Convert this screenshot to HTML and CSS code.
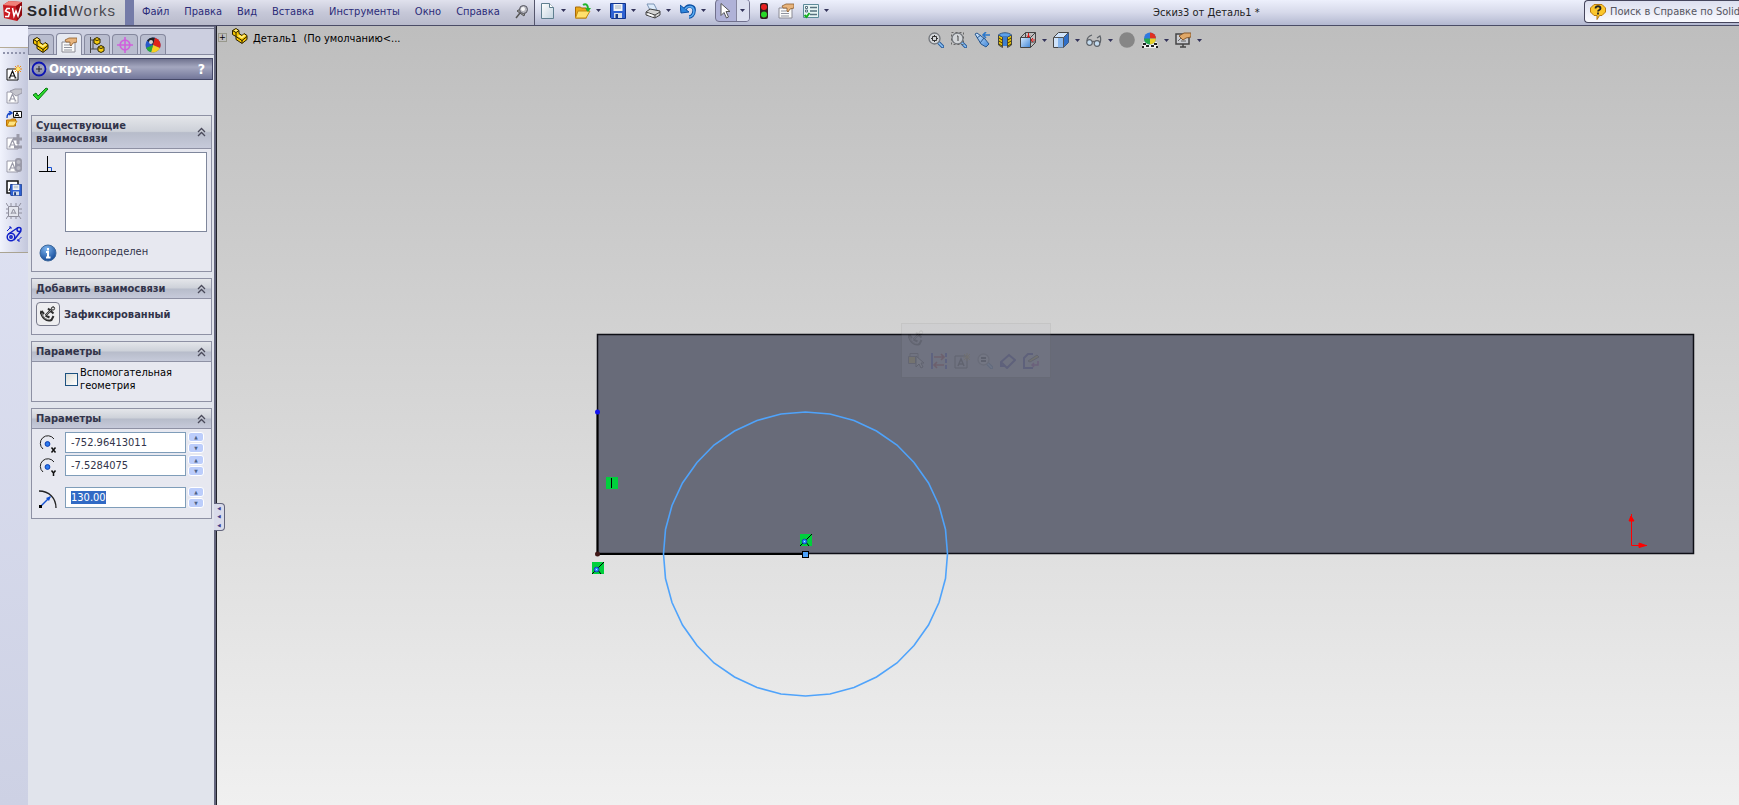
FILE: index.html
```html
<!DOCTYPE html>
<html lang="ru">
  <head>
    <meta charset="UTF-8" />
    <meta name="viewport" content="width=device-width, initial-scale=1.0" />
    <title>SolidWorks - Эскиз3 от Деталь1</title>
    <link rel="stylesheet" href="styles.css">
  </head>
  <body>
    <!-- Общие значки -->
    <svg class="defs" width="0" height="0" aria-hidden="true">
      <defs>
        <linearGradient id="gBlue" x1="0" y1="0" x2="1" y2="1">
          <stop offset="0" stop-color="#d8ecff" />
          <stop offset="1" stop-color="#3f86d8" />
        </linearGradient>
        <linearGradient id="gPage" x1="0" y1="0" x2="1" y2="1">
          <stop offset="0" stop-color="#ffffff" />
          <stop offset="1" stop-color="#c2d3df" />
        </linearGradient>
        <radialGradient id="gInfo" cx="0.4" cy="0.25" r="0.8">
          <stop offset="0" stop-color="#7db4ee" />
          <stop offset="1" stop-color="#0e4494" />
        </radialGradient>
      </defs>
      <symbol id="caret" viewBox="0 0 5 3"><path d="M0 0h5L2.500 3z" fill="#33335a" /></symbol>
      <symbol id="chevrons" viewBox="0 0 9 10">
        <path d="M1 5l3.500-3.500L8 5M1 9l3.500-3.500L8 9" fill="none" stroke="#4a4a5a" stroke-width="1.300" />
      </symbol>
      <symbol id="part" viewBox="0 0 16 16">
        <path d="M.5 2.500L4 .5l3 2v3l3 2 2-2 3 2v4l-5 4-6-4v-3l-3.500-2z" fill="#f5c400" stroke="#2a2000" />
        <path d="M.5 2.500l3.500 2 3-2M4 4.500v4l6 4 5-4M10 12v3" fill="none" stroke="#2a2000" />
        <path d="M4 1.200L6 2.500 4 3.800 2 2.600zM7.500 7l2.500 1.500 2-2 1.800 1-3.800 3L5.500 8z" fill="#ffee80" />
      </symbol>
      <symbol id="props" viewBox="0 0 16 16">
        <path d="M1 5h13v10H1z" fill="#fafafa" stroke="#8a8a94" />
        <path d="M3 8h8M3 10.500h8M3 13h8" stroke="#8f939e" />
        <path d="M4 3l4-2 8 0v4l-4 1-2 3-1-1 0-3-4 0z" fill="#e8b47c" stroke="#8a5a2c" stroke-width=".8" />
      </symbol>
      <symbol id="note" viewBox="0 0 16 16">
        <path d="M1 4h11v11H1z" fill="#fff" stroke="currentColor" />
        <path d="M3.500 13l3-7 3 7M4.500 11h4M2.500 13h2M8.500 13h2" fill="none" stroke="currentColor" stroke-width="1.200" />
      </symbol>
      <symbol id="disk" viewBox="0 0 16 16">
        <path d="M.5.5h15v15h-14l-1-1z" fill="#2f62d2" stroke="#12358c" />
        <path d="M3.500 1h9v7h-9z" fill="#f2f5f8" />
        <path d="M5 3h6M5 5h6" stroke="#a4b0bc" />
        <path d="M4 10h8v5H4z" fill="#d5dde8" /><path d="M5.500 11h2.500v4H5.500z" fill="#173a86" />
      </symbol>
      <symbol id="anchor" viewBox="0 0 16 16">
        <path d="M14 1L5.500 9.500M8 2.500l5.500 5M1.500 5c-1 6 5 11 10 9l2-4M1.500 5L4 8M1.500 5L0 8M5.500 9.500l4 2" fill="none" stroke="#2c2c2c" stroke-width="2" />
        <path d="M13.500 1.500L6 9M2 7c0 4 4 7 8 6.500" fill="none" stroke="#a5a5a5" stroke-width=".8" />
        <circle cx="13" cy="2.500" r="1.600" fill="#ddd" stroke="#2c2c2c" />
      </symbol>
      <symbol id="lens" viewBox="0 0 16 16">
        <path d="M10.500 10.500l4 4" stroke="#245a9c" stroke-width="3.400" stroke-linecap="round" />
        <path d="M10.500 10.500l4 4" stroke="#8fc3f5" stroke-width="1.600" stroke-linecap="round" />
        <circle cx="6.500" cy="6.500" r="5.500" fill="#d2d5d8" stroke="#73777c" stroke-width="1.300" />
      </symbol>
      <symbol id="coincident" viewBox="0 0 12 12">
        <path d="M0 0h12v12H0z" fill="#00d03c" />
        <path d="M0 12L12 0M5 7l4 5" stroke="#000" fill="none" />
        <circle cx="4.500" cy="7.500" r="2.400" fill="#2b8cff" stroke="#1547b0" />
        <path d="M4 7h1v1H4z" fill="#c0ecff" />
      </symbol>
    </svg>

    <header class="topbar">
      <div class="brand">
        <svg class="brand-logo" width="22" height="22" viewBox="0 0 22 22">
          <path d="M1 5l6-4 13 1v13l-5 6-13-3z" fill="#c81a20" />
          <path d="M1 5l6-4 13 1-6 4z" fill="#f08078" />
          <path d="M14 6l6-4v13l-5 6z" fill="#8f0a10" />
          <path d="M8 8.500H5L3.500 11l4 2-1 3.500H3M10.500 8l1.500 8 2-5 2 5 3-10" fill="none" stroke="#fff" stroke-width="1.500" />
        </svg>
        <span class="brand-name"><b>Solid</b>Works</span>
      </div>
      <nav class="menu">
        <a href="#">Файл</a>
        <a href="#">Правка</a>
        <a href="#">Вид</a>
        <a href="#">Вставка</a>
        <a href="#">Инструменты</a>
        <a href="#">Окно</a>
        <a href="#">Справка</a>
        <button class="icon-btn" aria-label="Закрепить">
          <svg width="14" height="16" viewBox="0 0 14 16">
            <path d="M1 14l4-5" stroke="#555" stroke-width="1.500" />
            <path d="M2 7l7 5 1-3-5-4z" fill="#999" stroke="#555" />
            <circle cx="8.500" cy="5.500" r="4" fill="#b7b7bf" stroke="#55555f" />
            <circle cx="8" cy="5" r="2" fill="#f8f8fa" />
          </svg>
        </button>
      </nav>
      <div class="toolbar">
        <button class="split" aria-label="Создать">
          <svg width="16" height="16" viewBox="0 0 16 16"><path d="M1.500.5h8l4 4v11h-12z" fill="url(#gPage)" stroke="#5f7f8f" /><path d="M9.500.5v4h4" fill="#fff" stroke="#5f7f8f" /></svg>
          <svg class="caret"><use href="#caret" /></svg>
        </button>
        <button class="split" aria-label="Открыть">
          <svg width="16" height="16" viewBox="0 0 16 16"><path d="M.5 4h5l1 1h5v10H.5z" fill="#e9a818" stroke="#a86a08" /><path d="M3 8h12l-4 7H.5z" fill="#ffe06c" stroke="#c48a10" /><path d="M8 2c3-2 5 0 5 4" fill="none" stroke="#22b52a" stroke-width="2" /><path d="M10 5h6l-3 4z" fill="#22b52a" /></svg>
          <svg class="caret"><use href="#caret" /></svg>
        </button>
        <button class="split" aria-label="Сохранить">
          <svg width="16" height="16"><use href="#disk" /></svg>
          <svg class="caret"><use href="#caret" /></svg>
        </button>
        <button class="split" aria-label="Печать">
          <svg width="16" height="16" viewBox="0 0 16 16"><path d="M2 1h7l3 6H5z" fill="#dcebfb" stroke="#7c95b5" /><path d="M1 9l4-3 10 2v4l-5 3-9-3z" fill="#d4d4d4" stroke="#444" /><path d="M1 9l9 3 5-3M10 12v3" fill="none" stroke="#444" /><path d="M3 11l5 2" stroke="#fff" stroke-width="1.500" /></svg>
          <svg class="caret"><use href="#caret" /></svg>
        </button>
        <button class="split" aria-label="Отменить">
          <svg width="16" height="16" viewBox="0 0 16 16"><path d="M5 6c3-5 10-3 9 2 0 4-3 6-5 6" fill="none" stroke="#0c50a4" stroke-width="3.500" /><path d="M0 2l1 8 8-1z" fill="#2f86dc" stroke="#0c50a4" /><path d="M5 6c3-4 9-3 9 2 0 4-3 6-5 6" fill="none" stroke="#5aaaf0" stroke-width="1.600" /></svg>
          <svg class="caret"><use href="#caret" /></svg>
        </button>
        <button class="split split-active" aria-label="Выбрать">
          <svg width="20" height="16" viewBox="0 0 20 16"><path d="M5 .5v12l3-3 2.500 5.500 2-1-2.500-5.500h4z" fill="#fff" stroke="#555" /></svg>
          <span class="split-drop"><svg class="caret"><use href="#caret" /></svg></span>
        </button>
        <button class="icon-btn" aria-label="Перестроить">
          <svg width="10" height="16" viewBox="0 0 10 16"><rect x="1" width="8" height="16" rx="2" fill="#302020" /><circle cx="5" cy="4" r="3" fill="#e82020" /><circle cx="5" cy="11.500" r="3" fill="#28d828" /></svg>
        </button>
        <button class="icon-btn" aria-label="Свойства файла"><svg width="16" height="16"><use href="#props" /></svg></button>
        <button class="split" aria-label="Параметры">
          <svg width="16" height="16" viewBox="0 0 16 16"><path d="M.5 1.500h15v13H.5z" fill="#e7f4f4" stroke="#5d8a9a" /><path d="M7 4.500h7M7 8h7M7 11.500h7" stroke="#56707e" stroke-width="1.400" /><path d="M2.500 3.500h2v2h-2zM2.500 7h2v2h-2z" fill="#fff" stroke="#56707e" /><path d="M1.500 12l2 2 3-4" fill="none" stroke="#16b020" stroke-width="2" /></svg>
          <svg class="caret"><use href="#caret" /></svg>
        </button>
      </div>
      <div class="doc-title">Эскиз3 от Деталь1 *</div>
      <div class="search">
        <svg width="16" height="16" viewBox="0 0 16 16"><path d="M4 .5h8L15.500 4v4L12 11.500H9.500L7 15.500v-4H4L.5 8V4z" fill="#fbc62c" stroke="#b8780c" /><path d="M5.500 4.500c0-3 5-3 5 0 0 1.500-2.500 1.500-2.500 3M8 8.500v2" fill="none" stroke="#222" stroke-width="1.800" /></svg>
        <input type="text" aria-label="Поиск" placeholder="Поиск в Справке по SolidWorks" />
      </div>
    </header>

    <main class="workspace">
      <div class="side">
        <div class="side-top"></div>
        <div class="side-tools">
          <button class="icon-btn" aria-label="Новый блок"><svg width="16" height="16" viewBox="0 0 16 16" color="#111"><use href="#note" /><path d="M12 0v8M8 4h8M9 1l6 6M15 1L9 7" stroke="#f08a10" /><circle cx="12" cy="4" r="2" fill="#ffe870" /></svg></button>
          <button class="icon-btn" aria-label="Править блок"><svg width="16" height="16" viewBox="0 0 16 16" color="#9a9aa8"><use href="#note" /><path d="M4 3l5-2h7v4l-6 3z" fill="#c4c4cc" stroke="#9a9aa8" /></svg></button>
          <button class="icon-btn" aria-label="Вставить блок"><svg width="16" height="16" viewBox="0 0 16 16"><path d="M7.500.5h8v6h-8z" fill="#fff" stroke="#111" /><path d="M9 5.500l2-4 2 4M10 4.500h2" fill="none" stroke="#111" /><path d="M1 7c0-3 1-5 4-5M3 0l3 2-3 2" fill="none" stroke="#1446c8" stroke-width="1.400" /><path d="M.5 9h4l1-1h4v7H.5z" fill="#f0a818" stroke="#b87008" /><path d="M3 10h8l-3 5H1z" fill="#ffe480" stroke="#c88810" /></svg></button>
          <button class="icon-btn" aria-label="Добавить"><svg width="16" height="16" viewBox="0 0 16 16" color="#9a9aa8"><use href="#note" /><path d="M12 0v10M7 5h9M8 13h8" stroke="#9a9aa8" stroke-width="3" /></svg></button>
          <button class="icon-btn" aria-label="Перестроить блок"><svg width="16" height="16" viewBox="0 0 16 16" color="#9a9aa8"><use href="#note" /><rect x="9" y="1" width="7" height="14" rx="3" fill="#9a9aa8" /><circle cx="12.500" cy="5" r="2" fill="#babac4" /><circle cx="12.500" cy="11" r="2" fill="#babac4" /></svg></button>
          <button class="icon-btn" aria-label="Сохранить блок"><svg width="16" height="16" viewBox="0 0 16 16"><path d="M1 1h11v12H1z" fill="#fff" stroke="#111" stroke-width="1.500" /><path d="M3 11l3-7" stroke="#111" /><use href="#disk" x="4" y="4" width="12" height="12" /></svg></button>
          <button class="icon-btn" aria-label="Разнести блок"><svg width="16" height="16" viewBox="0 0 16 16"><path d="M2.500 3.500h10v10h-10z" fill="#e4e6ee" stroke="#8e8e9c" /><path d="M5 11l2.500-5 2.500 5M6 10h3M0 0l2 3M5 0v3M10 0v3M15 0l-2 3M0 16l2-3M5 16v-3M10 16v-3M15 16l-2-3M0 6h2M0 10h2M13 6h3M13 10h3" fill="none" stroke="#8e8e9c" /></svg></button>
          <button class="icon-btn" aria-label="Ремень"><svg width="16" height="16" viewBox="0 0 16 16" fill="none" stroke="#1020c8" stroke-width="1.500"><circle cx="5" cy="11" r="3.800" /><circle cx="5" cy="11" r="1.200" /><circle cx="13" cy="3.500" r="2" /><path d="M2.500 8L12 1.500M8 14l7-9" /><path d="M1 5l4-4M3 1h2v2M15.500 11l-4 4M12 13v2h2" stroke-width="1" /></svg></button>
        </div>
      </div>

      <aside class="panel">
        <div class="tabs">
          <button class="tab" aria-label="Дерево"><svg width="16" height="16"><use href="#part" /></svg></button>
          <button class="tab tab-active" aria-label="Менеджер свойств"><svg width="16" height="16"><use href="#props" /></svg></button>
          <button class="tab" aria-label="Конфигурации"><svg width="16" height="16" viewBox="0 0 16 16"><path d="M1.500 0v16M1 3h5M1 12h8M4 3v9" stroke="#444" fill="none" /><path d="M5 2l3-1.500L11 2v4L8 7.500 5 6zM9 10l3-1.500 3 1.500v4l-3 1.500L9 14z" fill="#f6cc10" stroke="#302800" /><path d="M5.500 2.500L8 3.500l2.500-1M9.500 10.500l2.500 1 2.500-1" fill="none" stroke="#302800" /></svg></button>
          <button class="tab" aria-label="Размеры"><svg width="16" height="16" viewBox="0 0 16 16"><circle cx="8" cy="8" r="4.800" fill="none" stroke="#d060dc" stroke-width="1.800" /><path d="M8 0v16M0 8h16" stroke="#d060dc" stroke-width="1.600" /></svg></button>
          <button class="tab" aria-label="Отображение"><svg width="16" height="16" viewBox="0 0 16 16"><circle cx="8" cy="8" r="7.500" fill="#2858c8" /><path d="M8 8L2 3.500A7.500 7.500 0 0 1 10 .8z" fill="#222" /><path d="M8 8L10 .8A7.500 7.500 0 0 1 15 11z" fill="#e02418" /><path d="M8 8l7 3A7.500 7.500 0 0 1 6 15.200z" fill="#f8d020" /><path d="M8 8l-2 7.200A7.500 7.500 0 0 1 1 11z" fill="#28a838" /><circle cx="6" cy="5" r="2" fill="#fff" opacity=".8" /></svg></button>
        </div>

        <div class="panel-title">
          <svg width="16" height="16" viewBox="0 0 16 16"><circle cx="8" cy="8" r="6.500" fill="none" stroke="#0c14b4" stroke-width="1.800" /><path d="M8 5v6M5 8h6" stroke="#222" /></svg>
          <h1>Окружность</h1>
          <button class="help" aria-label="Помощь">?</button>
        </div>
        <button class="ok" aria-label="ОК">
          <svg width="17" height="14" viewBox="0 0 17 14"><path d="M1 8l3-2 2 3 8-8 2 1L6 13z" fill="#2bd82b" stroke="#0b7a14" /></svg>
        </button>

        <section class="group">
          <h2>Существующие взаимосвязи <svg width="9" height="10"><use href="#chevrons" /></svg></h2>
          <div class="group-body">
            <div class="row row-top">
              <svg class="row-icon" width="18" height="18" viewBox="0 0 18 18"><path d="M8.500 1v16M0 16.500h17" stroke="#000" fill="none" /><path d="M9 12.500h3.500V16" stroke="#1450d0" fill="none" /></svg>
              <div class="relations"></div>
            </div>
            <div class="row status">
              <svg class="row-icon" width="18" height="18" viewBox="0 0 18 18"><circle cx="9" cy="9" r="8" fill="url(#gInfo)" stroke="#3f699c" /><path d="M9 4v2.500M7 8h2v5M7 13.500h4.500" stroke="#fff" stroke-width="2" fill="none" /></svg>
              <span>Недоопределен</span>
            </div>
          </div>
        </section>

        <section class="group">
          <h2>Добавить взаимосвязи <svg width="9" height="10"><use href="#chevrons" /></svg></h2>
          <div class="group-body group-fix">
            <button class="fix"><span class="fix-icon"><svg width="16" height="16"><use href="#anchor" /></svg></span>Зафиксированный</button>
          </div>
        </section>

        <section class="group">
          <h2>Параметры <svg width="9" height="10"><use href="#chevrons" /></svg></h2>
          <div class="group-body group-check">
            <input type="checkbox" id="construction" />
            <label for="construction">Вспомогательная геометрия</label>
          </div>
        </section>

        <section class="group">
          <h2>Параметры <svg width="9" height="10"><use href="#chevrons" /></svg></h2>
          <div class="group-body group-params">
            <div class="row">
              <svg class="row-icon" width="18" height="18" viewBox="0 0 18 18"><path d="M15 4A7.500 7.500 0 1 0 4 14" fill="none" stroke="#222" /><circle cx="8.500" cy="9" r="2.400" fill="#2c7cf0" stroke="#0c3cb0" /><path d="M12.500 12.500l4 5M16.500 12.500l-4 5" stroke="#111" stroke-width="1.500" /></svg>
              <input class="num" type="text" aria-label="Координата X центра" value="-752.96413011" />
              <div class="spin"><button aria-label="Больше">▲</button><button aria-label="Меньше">▼</button></div>
            </div>
            <div class="row">
              <svg class="row-icon" width="18" height="18" viewBox="0 0 18 18"><path d="M15 4A7.500 7.500 0 1 0 4 14" fill="none" stroke="#222" /><circle cx="8.500" cy="9" r="2.400" fill="#2c7cf0" stroke="#0c3cb0" /><path d="M12.500 12.500l2 2.500 2-2.500M14.500 15v3" stroke="#111" stroke-width="1.500" fill="none" /></svg>
              <input class="num" type="text" aria-label="Координата Y центра" value="-7.5284075" />
              <div class="spin"><button aria-label="Больше">▲</button><button aria-label="Меньше">▼</button></div>
            </div>
            <div class="row row-radius">
              <svg class="row-icon" width="18" height="18" viewBox="0 0 18 18"><path d="M0 1c10 0 17 7 17 17" fill="none" stroke="#222" stroke-width="1.300" /><path d="M2 16L11 7" stroke="#1450d0" stroke-width="1.400" /><path d="M7 8l5-2-2 5z" fill="#1450d0" /><path d="M0 15h3v3H0z" fill="#000" /></svg>
              <input class="num" id="radius" type="text" aria-label="Радиус" value="130.00" />
              <div class="spin"><button aria-label="Больше">▲</button><button aria-label="Меньше">▼</button></div>
            </div>
          </div>
        </section>

        <button class="splitter" aria-label="Свернуть панель"><span>◀</span><span>◀</span><span>◀</span></button>
      </aside>

      <div class="canvas">
        <!-- Эскиз: грань детали, окружность и обозначения взаимосвязей -->
        <svg class="scene" width="100%" height="100%">
          <rect x="380.500" y="308.500" width="1096" height="219" fill="#686b79" stroke="#0e0f16" stroke-width="1.500" />
          <path d="M380.500 386v142H589" fill="none" stroke="#000" stroke-width="2" />
          <polygon fill="none" stroke="#4fa3fb" stroke-width="1.600" points="588.500,386 613,388 637,394.500 659.500,405 680,419 697,436.500 711.500,457 722,479.500 728.500,503.500 730.500,528 728.500,552.500 722,576.500 711.500,599 697,619.500 680,637 659.500,651 637,661.500 613,668 588.500,670 564,668 540,661.500 517.500,651 497,637 480,619.500 465.500,599 455,576.500 448.500,552.500 446.500,528 448.500,503.500 455,479.500 465.500,457 480,436.500 497,419 517.500,405 540,394.500 564,388" />
          <circle cx="380.500" cy="386" r="2.500" fill="#1414f0" />
          <circle cx="380.500" cy="528" r="2.500" fill="#401818" />
          <rect x="389" y="451" width="12" height="12" fill="#00d03c" />
          <path d="M394.500 452v10" stroke="#000" />
          <use href="#coincident" x="583" y="508" width="12" height="12" />
          <use href="#coincident" x="375" y="536" width="12" height="12" />
          <rect x="585.500" y="525.500" width="6" height="6" fill="#4fa3fb" stroke="#000" />
          <path d="M1414.500 488v31.500H1430" fill="none" stroke="#f00" />
          <path d="M1412 495l2-5 3 5zM1422 517l7 2.500-7 2z" fill="#f00" stroke="#f00" />
        </svg>

        <div class="canvas-head">
          <div class="tree">
            <button class="expand" aria-label="Развернуть">+</button>
            <svg width="16" height="16"><use href="#part" /></svg>
            <span>Деталь1&nbsp; (По умолчанию&lt;...</span>
          </div>
          <div class="hud">
            <button class="icon-btn" aria-label="Изменить в размер экрана"><svg width="16" height="16" viewBox="0 0 16 16"><use href="#lens" /><path d="M6.500 3v1.500M6.500 8.500V10M3 6.500h1.500M8.500 6.500H10M4.500 4.500h4v4h-4z" stroke="#333" fill="none" /></svg></button>
            <button class="icon-btn" aria-label="Увеличить область"><svg width="16" height="16" viewBox="0 0 16 16"><use href="#lens" /><path d="M.5.5h12v12H.5z" stroke="#666" stroke-dasharray="2 2" fill="none" /><path d="M6 4h1v5" stroke="#444" fill="none" /></svg></button>
            <button class="icon-btn" aria-label="Предыдущий вид"><svg width="16" height="16" viewBox="0 0 16 16"><path d="M1 2l2-1 8 6 4 5-3 3-5-3z" fill="url(#gBlue)" stroke="#28578e" /><path d="M3 6l4-3M6 11l4-5" stroke="#28578e" /><path d="M16 3H9M12 0L9 3l3 3" fill="none" stroke="#2b78cc" stroke-width="1.600" /></svg></button>
            <button class="icon-btn" aria-label="Разрез"><svg width="16" height="16" viewBox="0 0 16 16"><path d="M1.500 3v10l4 2.500V5zM14.500 3v10l-4 2.500V5z" fill="#e8c40c" stroke="#444" /><path d="M1.500 3c3-3 10-3 13 0l-4 2h-5z" fill="#5aa0ec" stroke="#345a88" /><path d="M6 5h4v9H6z" fill="#3d7ed0" /><path d="M2 6l3 2M2 9l3 2M2 12l3 2M14 6l-3 2M14 9l-3 2M14 12l-3 2" stroke="#443800" /></svg></button>
            <button class="split" aria-label="Ориентация"><svg width="16" height="16" viewBox="0 0 16 16"><path d="M.5 5.500h10v10H.5z" fill="url(#gBlue)" stroke="#444" /><path d="M.5 5.500l5-5h10v10l-5 5M10.500 5.500l5-5M5.500.5v5M11 10h5" fill="none" stroke="#444" /><path d="M8.500 1v4M7 3.500l1.500 2 1.500-2M15 8h-4M13 6l-2 2 2 2" stroke="#d81818" fill="none" /></svg><svg class="caret"><use href="#caret" /></svg></button>
            <button class="split" aria-label="Стиль отображения"><svg width="16" height="16" viewBox="0 0 16 16"><path d="M.5 5.500l5-5h10v10l-5 5H.5z" fill="#cfe3fa" stroke="#444" /><path d="M10.500 5.500l5-5v10l-5 5z" fill="#2f6fc8" /><path d="M5 5.500h5.500v10H5z" fill="#86b6ee" /><path d="M.5 5.500h10v10M10.500 5.500l5-5" stroke="#555" fill="none" /></svg><svg class="caret"><use href="#caret" /></svg></button>
            <button class="split" aria-label="Скрыть/отобразить"><svg width="16" height="16" viewBox="0 0 16 16"><g fill="#c4dcf0" stroke="#5d6268" stroke-width="1.200"><circle cx="3.500" cy="10.500" r="2.800" /><circle cx="11" cy="11.500" r="2.800" /><path d="M6 10c1-1 2-1 2.500 0M1 9c0-4 2-5 5-6M14 11c1-3 1-5 0-7l-3 2" fill="none" /></g></svg><svg class="caret"><use href="#caret" /></svg></button>
            <button class="icon-btn" aria-label="Внешний вид"><svg width="16" height="16" viewBox="0 0 16 16"><circle cx="8" cy="8" r="7.800" fill="#868686" /></svg></button>
            <button class="split" aria-label="Сцена"><svg width="16" height="16" viewBox="0 0 16 16"><path d="M1 10h14l1 6H0z" fill="#f2f2f2" /><path d="M1 11h3v2H1zM4 13h3v2H4zM9 13h3v2H9zM12 11h3v2h-3zM0 14h2v2H0zM14 14h2v2h-2z" fill="#222" /><circle cx="8" cy="6.500" r="6" fill="#2f78e0" /><path d="M8 6.500V.5a6 6 0 0 1 6 6z" fill="#e03020" /><path d="M8 6.500h6a6 6 0 0 1-6 6z" fill="#e8d028" /><path d="M8 6.500v6a6 6 0 0 1-6-6z" fill="#28a84c" /></svg><svg class="caret"><use href="#caret" /></svg></button>
            <button class="split" aria-label="Параметры вида"><svg width="16" height="16" viewBox="0 0 16 16"><path d="M1 2h13v10H1z" fill="#c9cbd0" stroke="#444" stroke-width="1.500" /><path d="M5 15h6M8 12v3" stroke="#444" stroke-width="1.500" /><path d="M3 9l3-3M6 9h5" stroke="#666" /><path d="M4 4l5-3h7v4l-5 1-3 2z" fill="#e0a868" stroke="#8a5a2c" /></svg><svg class="caret"><use href="#caret" /></svg></button>
          </div>
        </div>

        <!-- Полупрозрачная контекстная панель -->
        <div class="context">
          <svg width="16" height="16"><use href="#anchor" /></svg>
          <div class="context-row">
            <svg width="16" height="16" viewBox="0 0 16 16"><path d="M.5 3.500h7v7h-7z" fill="#e0c020" stroke="#444" /><path d="M2 3V.5h8V7" fill="none" stroke="#444" /><path d="M8 3v11l3-3 2 4 2-1-2-4h3z" fill="#ddd" stroke="#222" /></svg>
            <svg width="16" height="16" viewBox="0 0 16 16"><path d="M1 0v16" stroke="#1020c0" stroke-width="2" /><path d="M15 0v16" stroke="#1020c0" stroke-width="2" stroke-dasharray="4 2" /><path d="M3 4h10M10 1l3 3-3 3M13 12H3M6 9l-3 3 3 3" fill="none" stroke="#a00808" stroke-width="1.600" /></svg>
            <svg width="16" height="16" viewBox="0 0 16 16"><path d="M1 3h12v12H1z" fill="none" stroke="#222" /><path d="M4 13l3-7 3 7M5 11h4" fill="none" stroke="#222" stroke-width="1.500" /><path d="M13 0v8M9 4h7M10 1l6 6M16 1l-6 6" stroke="#c0a020" /></svg>
            <svg width="16" height="16" viewBox="0 0 16 16"><use href="#lens" /><path d="M4 5h5M4 8h5" stroke="#111" stroke-width="2" /></svg>
            <svg width="16" height="16" viewBox="0 0 16 16"><path d="M1 9l8-7 6 5-8 8zM1 9v4h4" fill="none" stroke="#10108c" stroke-width="2" /></svg>
            <svg width="16" height="16" viewBox="0 0 16 16"><path d="M10 1H5L1 5v10h9" fill="none" stroke="#10108c" stroke-width="2" /><path d="M5 8l9-6 2 2-9 5z" fill="#c0a820" stroke="#333" /><path d="M9 12h6V8M11 10l-2 2 2 2" fill="none" stroke="#8a1090" stroke-width="1.500" /></svg>
          </div>
        </div>
      </div>
    </main>

    <script>
      // Значение радиуса сразу выделено для ввода
      var radius = document.getElementById("radius");
      radius.focus();
      radius.select();
    </script>
  </body>
</html>
```
FILE: styles.css
```css
* {
  box-sizing: border-box;
}

body {
  margin: 0;
  height: 100vh;
  display: flex;
  flex-direction: column;
  overflow: hidden;
  font-family: "DejaVu Sans Condensed", "DejaVu Sans", sans-serif;
  font-size: 11px;
  line-height: 13px;
  color: #000;
}

svg {
  display: block;
  flex: none;
}

button {
  padding: 0;
  border: none;
  background: none;
  font: inherit;
  color: inherit;
}

.defs {
  position: absolute;
}

/* Верхняя строка */
.topbar {
  display: flex;
  flex: none;
  height: 26px;
  border-bottom: 1px solid #4a4c66;
  background: linear-gradient(#edf0fc, #d6d9ea 50%, #b3b8d0);
}

.brand {
  display: flex;
  align-items: center;
  gap: 3px;
  width: 134px;
  padding-left: 2px;
  padding-bottom: 4px;
  border-right: 9px solid #747ba8;
  background: linear-gradient(#d5d7dc, #c3c6cf);
}

.brand-name {
  font-family: "Liberation Sans", Arial, sans-serif;
  font-size: 15px;
  line-height: 20px;
  letter-spacing: 1px;
  color: #4a4a50;
}

.brand-name b {
  color: #26262a;
}

.menu {
  display: flex;
  align-items: center;
  gap: 15px;
  padding: 0 5px 2px 8px;
  border-right: 1px solid #55566c;
  background: linear-gradient(#e0e1ed, #c6c8d8 50%, #b8bacb);
}

.menu a {
  color: #2b2b78;
  text-decoration: none;
}

.toolbar {
  display: flex;
  align-items: center;
  gap: 9px;
  padding: 0 0 4px 5px;
}

.split {
  display: flex;
  align-items: center;
  gap: 6px;
}

.toolbar .split {
  gap: 5px;
}

.caret {
  width: 5px;
  height: 3px;
}

.toolbar .split-active {
  gap: 0;
  height: 23px;
  border: 1px solid #70708c;
  border-radius: 4px;
  background: #b0b2d8;
}

.split-drop {
  display: flex;
  align-items: center;
  justify-content: center;
  width: 13px;
  height: 100%;
  border-left: 1px solid #85859e;
  border-radius: 0 3px 3px 0;
  background: #dcdff0;
}

.doc-title {
  flex: 1;
  padding-top: 6px;
  text-align: center;
  color: #222;
}

.search {
  display: flex;
  align-items: center;
  gap: 4px;
  width: 155px;
  height: 23px;
  padding-left: 5px;
  border: 1px solid #45455c;
  border-right: none;
  border-radius: 4px 0 0 4px;
  background: linear-gradient(#dcdfef, #fafaff);
}

.search input {
  flex: 1;
  min-width: 0;
  padding: 0;
  border: none;
  background: none;
  font: inherit;
}

.search input::placeholder {
  color: #55555f;
}

.workspace {
  display: flex;
  flex: 1;
  min-height: 0;
}

/* Левая панель инструментов */
.side {
  width: 28px;
  background: linear-gradient(#e3e6f6, #cdd1e4);
}

.side-top {
  height: 22px;
  border-bottom: 1px solid #b5ab96;
  background: #eef0fc;
}

.side-tools {
  display: flex;
  flex-direction: column;
  align-items: center;
  gap: 7px;
  padding: 12px 0 10px;
  border-bottom: 1px solid #a9a392;
  background: linear-gradient(90deg, #f1f3fd, #c3c7dc);
}

.side-tools::before {
  content: "";
  width: 22px;
  margin: -8px 0 4px;
  border-top: 2px dotted #9094ac;
}

/* Менеджер свойств */
.panel {
  position: relative;
  width: 189px;
  border-right: 3px solid #63657c;
  border-right-style: ridge;
  background: #e1e4ec;
}

.tabs {
  display: flex;
  align-items: flex-end;
  gap: 2px;
  height: 29px;
  border-top: 3px double #75788e;
  border-bottom: 1px solid #868aa0;
  background: #cccfe0;
}

.tab {
  display: flex;
  align-items: center;
  justify-content: center;
  width: 26px;
  height: 20px;
  border: 1px solid #85889e;
  border-bottom: none;
  border-radius: 4px 4px 0 0;
  background: #b9bdcf;
}

.tab-active {
  height: 22px;
  margin-bottom: -1px;
  background: #e6e9f1;
}

.panel-title {
  display: flex;
  align-items: center;
  gap: 2px;
  height: 22px;
  margin: 3px 1px 0;
  padding: 0 7px 0 1px;
  border: 1px solid #454868;
  background: linear-gradient(#70738f, #a4a7bf 40%, #73779a);
  color: #fff;
}

.panel-title h1 {
  flex: 1;
  margin: 0;
  font-size: 13px;
  line-height: 16px;
}

.help {
  font-size: 14px;
  font-weight: bold;
}

.ok {
  display: block;
  margin: 7px 0 14px 4px;
}

.group {
  margin: 0 2px 6px 3px;
  border: 1px solid #8e91a4;
  background: #e7e8f0;
}

.group h2 {
  display: flex;
  align-items: center;
  justify-content: space-between;
  margin: 0;
  padding: 3px 5px 3px 4px;
  border-bottom: 1px solid #8e91a4;
  background: linear-gradient(#e4e6ea, #cdd1d9 48%, #b7bcca 52%, #c6cada);
  font-size: 11px;
  line-height: 13px;
  color: #32344a;
}

.group-body {
  padding: 3px 4px;
  color: #32344a;
}

.row {
  display: flex;
  align-items: center;
}

.row-top {
  align-items: flex-start;
}

.row-icon {
  margin: 3px 8px 0 3px;
}

.relations {
  flex: 1;
  height: 80px;
  border: 1px solid #7f879c;
  background: #fff;
}

.status {
  padding: 9px 0 6px;
}

.group-fix {
  padding-bottom: 8px;
}

.fix {
  display: flex;
  align-items: center;
  gap: 4px;
  font-weight: bold;
}

.fix-icon {
  display: flex;
  padding: 3px;
  border: 1px solid #77798a;
  border-radius: 4px;
  background: #eeeef0;
}

.group-check {
  display: flex;
  align-items: center;
  gap: 2px;
  padding: 4px 24px 9px 33px;
  color: #000;
}

.group-check input {
  appearance: none;
  flex: none;
  width: 13px;
  height: 13px;
  margin: 0;
  border: 1px solid #1c5180;
  background: linear-gradient(135deg, #dcdcd7, #fff);
}

.group-params {
  display: flex;
  flex-direction: column;
  gap: 2px;
  padding-bottom: 10px;
}

.row-radius {
  margin-top: 9px;
}

.num {
  flex: 1;
  min-width: 0;
  height: 21px;
  padding: 0 5px;
  border: 1px solid #7f9db9;
  outline: none;
  background: #fff;
  font: inherit;
  color: #32344a;
}

.num::selection {
  background: #316ac5;
  color: #fff;
}

.spin {
  display: flex;
  flex-direction: column;
  gap: 1px;
  width: 16px;
  margin: 0 3px 0 2px;
}

.spin button {
  height: 10px;
  border: 1px solid #fff;
  border-radius: 3px;
  background: #bccdfb;
  font-size: 5px;
  line-height: 8px;
  color: #4d6185;
}

.splitter {
  position: absolute;
  z-index: 1;
  top: 477px;
  right: -11px;
  display: flex;
  flex-direction: column;
  justify-content: space-around;
  align-items: center;
  width: 11px;
  height: 28px;
  border: 1px solid #63657c;
  border-left: none;
  border-radius: 0 4px 4px 0;
  background: #d9dbea;
  font-size: 5px;
  line-height: 7px;
  color: #3c3e8c;
}

/* Графическая область */
.canvas {
  position: relative;
  flex: 1;
  min-width: 0;
  overflow: hidden;
  background: linear-gradient(#bebebe, #f0f0f0);
}

.scene {
  position: absolute;
  top: 0;
  left: 0;
}

.canvas-head {
  position: relative;
  display: flex;
}

.tree {
  display: flex;
  gap: 5px;
  width: 45%;
  padding: 2px 0 0 1px;
}

.tree span {
  padding-top: 4px;
}

.expand {
  width: 9px;
  height: 9px;
  margin-top: 5px;
  border: 1px solid #98988c;
  font-size: 9px;
  line-height: 7px;
}

.hud {
  display: flex;
  align-items: center;
  gap: 6px;
  padding: 6px 0 0 26px;
}

.hud .icon-btn {
  padding-right: 1px;
}

.context {
  position: absolute;
  top: 297px;
  left: 684px;
  padding: 6px;
  border: 1px solid #666;
  background: #b8bac8;
  opacity: 0.1;
}

.context-row {
  display: flex;
  gap: 7px;
  padding: 7px 5px 2px 0;
}
```
